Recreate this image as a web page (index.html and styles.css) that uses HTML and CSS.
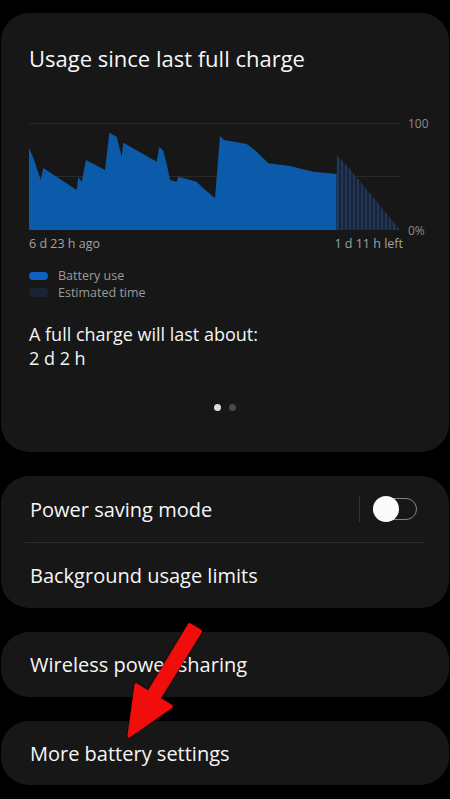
FILE: index.html
```html
<!DOCTYPE html>
<html lang="en">
<head>
    <meta charset="UTF-8">
    <meta name="viewport" content="width=device-width, initial-scale=1.0">
    <title>Battery</title>
    <link rel="stylesheet" href="styles.css">
</head>
<body>
    <div class="page">
        <section class="card usage">
            <h1 class="usage-title">Usage since last full charge</h1>

            <svg class="chart" width="401" height="124" viewBox="0 0 401 124">
                <defs>
                    <pattern id="hatch" width="4" height="120" patternUnits="userSpaceOnUse" x="0.5">
                        <rect width="4" height="120" fill="#172338"/>
                        <rect width="1" height="120" fill="#2c4a72"/>
                    </pattern>
                </defs>
                <line class="grid" x1="0" y1="8.5" x2="371" y2="8.5"/>
                <line class="grid" x1="0" y1="61.5" x2="371" y2="61.5"/>
                <path class="used" d="M0 33 L4 42 L7.7 53 L11.7 65 L14.3 53 L47.7 75 L49.3 62 L52.7 67 L57 45
                    L76 55 L80.3 17.7 L87.7 21.7 L92.7 41.7 L94.3 27.7 L127.7 46.7 L130.3 31.7 L134.3 35.7
                    L137.7 49 L141 65 L147.7 66.7 L149.3 61.7 L167.7 66.7 L174 73 L186 83 L191 21 L195 25
                    L217.7 29 L227.7 36.7 L239.3 48.3 L261 51 L284.3 56.7 L307.7 59 L307.7 115 L0 115 Z"/>
                <path d="M307.7 40 L322.7 56 L371 115 L307.7 115 Z" fill="url(#hatch)"/>
                <text class="axis" x="379" y="12.5">100</text>
                <text class="axis" x="379" y="119.5">0%</text>
            </svg>

            <div class="range">
                <span>6 d 23 h ago</span>
                <span>1 d 11 h left</span>
            </div>

            <ul class="legend">
                <li><span class="swatch swatch-use"></span>Battery use</li>
                <li><span class="swatch swatch-est"></span>Estimated time</li>
            </ul>

            <p class="estimate">A full charge will last about:<br>2 d 2 h</p>

            <div class="dots">
                <span class="dot active"></span>
                <span class="dot"></span>
            </div>
        </section>

        <section class="card">
            <div class="row">
                <span class="row-label">Power saving mode</span>
                <div class="switch-wrap">
                    <span class="switch"><span class="knob"></span></span>
                </div>
            </div>
            <div class="row">
                <span class="row-label">Background usage limits</span>
            </div>
        </section>

        <section class="card">
            <div class="row single">
                <span class="row-label">Wireless power sharing</span>
            </div>
        </section>

        <section class="card">
            <div class="row single last">
                <span class="row-label">More battery settings</span>
            </div>
        </section>

        <svg class="arrow" width="450" height="799" viewBox="0 0 450 799">
            <defs>
                <filter id="shade" x="-20%" y="-20%" width="140%" height="140%">
                    <feDropShadow dx="0" dy="0" stdDeviation="1.6" flood-color="#000" flood-opacity="0.9"/>
                </filter>
            </defs>
            <polygon points="189.5,624.6 200.5,631.4 158.8,698.7 171.3,706.4 129,736 136.1,684.8 148.6,692.5"
                fill="#f20a0a" stroke="#f20a0a" stroke-width="3" stroke-linejoin="round" filter="url(#shade)"/>
        </svg>
    </div>
</body>
</html>
```

FILE: styles.css
```css
html, body {
    margin: 0;
    padding: 0;
    background: #000;
}

body {
    font-family: "Open Sans", Roboto, sans-serif;
    color: #f2f2f2;
}

.page {
    position: relative;
    width: 450px;
    height: 799px;
    padding: 13px 1px 0;
    box-sizing: border-box;
    overflow: hidden;
}

.card {
    background: #171717;
    border-radius: 28px;
    margin-bottom: 24px;
}

/* usage card */

.usage {
    height: 439px;
    padding: 31px 0 0 28px;
    box-sizing: border-box;
}

.usage-title {
    margin: 0;
    font-size: 22px;
    font-weight: 400;
    line-height: 28px;
    color: #f6f6f6;
}

.chart {
    display: block;
    margin-top: 43px;
}

.grid {
    stroke: #2a2a2a;
    stroke-width: 1;
}

.used {
    fill: #0c5bab;
}

.axis {
    font-family: "Open Sans", sans-serif;
    font-size: 12px;
    fill: #8c8c8c;
}

.range {
    display: flex;
    justify-content: space-between;
    width: 374px;
    font-size: 12.5px;
    line-height: 10px;
    color: #a3a3a3;
}

.legend {
    list-style: none;
    margin: 18px 0 0;
    padding: 0;
    font-size: 12.5px;
    line-height: 17px;
    color: #9b9b9b;
}

.legend li {
    display: flex;
    align-items: center;
}

.swatch {
    width: 19px;
    height: 8px;
    border-radius: 4px;
    margin-right: 10px;
}

.swatch-use {
    background: #0e62c4;
}

.swatch-est {
    background: #1b2337;
    height: 9px;
}

.estimate {
    margin: 21px 0 0;
    font-size: 18px;
    line-height: 24px;
    color: #f4f4f4;
}

.dots {
    display: flex;
    justify-content: center;
    gap: 8px;
    margin: 34px 0 0 -28px;
}

.dot {
    width: 7px;
    height: 7px;
    border-radius: 50%;
    background: #4a4a4a;
}

.dot.active {
    background: #dcdcdc;
}

/* list cards */

.row {
    display: flex;
    align-items: center;
    height: 66px;
    margin: 0 24px;
    padding-left: 5px;
    border-bottom: 1px solid #2e2e2e;
}

.row:last-child {
    border-bottom: none;
    height: 65px;
}

.row.last {
    height: 64px;
}

.row-label {
    flex: 1;
    font-size: 20px;
    color: #f6f6f6;
}

.switch-wrap {
    display: flex;
    align-items: center;
    height: 26px;
    padding-left: 13px;
    margin-right: 8px;
    border-left: 1px solid #343434;
}

.switch {
    position: relative;
    width: 44px;
    height: 22px;
    border: 1.5px solid #858585;
    border-radius: 12px;
    box-sizing: border-box;
}

.knob {
    position: absolute;
    left: -1.5px;
    top: -3.5px;
    width: 26px;
    height: 26px;
    border-radius: 50%;
    background: #fafafa;
}

.arrow {
    position: absolute;
    left: 0;
    top: 0;
    pointer-events: none;
}
```
